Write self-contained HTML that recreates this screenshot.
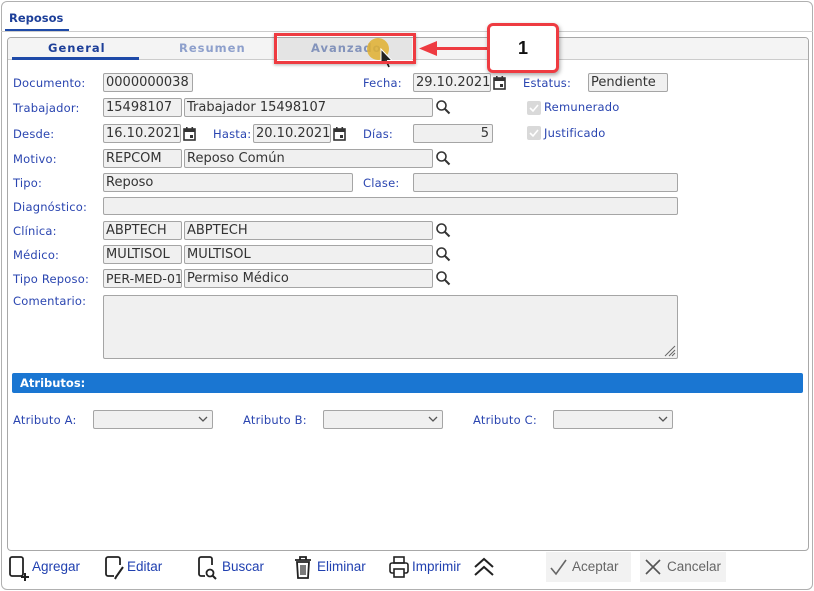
<!DOCTYPE html>
<html><head><meta charset="utf-8"><style>
*{box-sizing:border-box;margin:0;padding:0}
body{width:814px;height:591px;background:#fff;position:relative;overflow:hidden;font-family:"DejaVu Sans","Liberation Sans",sans-serif;}
.a{position:absolute}
.lbl{position:absolute;font-size:11.5px;color:#2a45b0;line-height:14px;letter-spacing:0.2px}
.f{position:absolute;height:19px;background:#f0f0f0;border:1px solid #a5a5a5;border-radius:2px;font-size:13px;color:#333;line-height:18px;padding-left:2px;white-space:nowrap;overflow:hidden;font-family:"DejaVu Sans",sans-serif}
.s{position:absolute;width:16px;height:16px}
.cb{position:absolute;width:14px;height:14px;background:#d9d9d9;border-radius:2px}
.tb{position:absolute;top:558px;font-size:13.5px;color:#2040b0;font-family:"Liberation Sans",sans-serif;line-height:18px}
</style></head><body>
<div class="a" style="left:1px;top:1px;width:812px;height:589px;border:1px solid #b0b0b0;border-radius:6px"></div>
<div class="a" style="left:9px;top:11px;font-size:11.5px;font-weight:bold;color:#1d3f99">Reposos</div>
<div class="a" style="left:5px;top:29px;width:64px;height:2px;background:#1e4aa8"></div>
<div class="a" style="left:1px;top:31px;width:812px;height:1px;background:#ccc"></div>
<div class="a" style="left:7px;top:37px;width:802px;height:514px;border:1px solid #a8a8a8;border-radius:4px"></div>
<div class="a" style="left:8px;top:38px;width:800px;height:22px;background:#f4f4f4;border-bottom:1px solid #ccc;border-radius:3px 3px 0 0"></div>
<div class="a" style="left:48px;top:41px;font-size:11.5px;font-weight:bold;color:#1d3f99;letter-spacing:1px">General</div>
<div class="a" style="left:12px;top:57px;width:127px;height:3px;background:#1e4aa8"></div>
<div class="a" style="left:179px;top:41px;font-size:11.5px;font-weight:bold;color:#8ea0cc;letter-spacing:1px">Resumen</div>
<div class="a" style="left:278px;top:38px;width:134px;height:22px;background:#e4e4e4"></div>
<div class="a" style="left:311px;top:41px;font-size:11.5px;font-weight:bold;color:#8393bb;letter-spacing:1px">Avanzado</div>
<div class="a" style="left:367px;top:38px;width:22px;height:22px;border-radius:50%;background:#e0b030;opacity:.85"></div>
<svg class="a" style="left:379px;top:48px" width="16" height="22"><path d="M2 1 L2 17 L6 13.5 L9 20 L11.5 19 L8.5 12.5 L13 12.5 Z" fill="#222" stroke="#fff" stroke-width="1"/></svg>
<div class="a" style="left:274px;top:33px;width:142px;height:31px;border:3px solid #ee3b41;box-shadow:0 1px 3px rgba(0,0,0,.3)"></div>
<svg class="a" style="left:415px;top:38px" width="75" height="22"><path d="M75 10.5 L20 10.5" stroke="#ee3b41" stroke-width="3"/><path d="M4 10.5 L22 3 L22 18 Z" fill="#ee3b41"/></svg>
<div class="a" style="left:487px;top:23px;width:72px;height:50px;border:3px solid #ee3b41;border-radius:6px;background:#fff;box-shadow:1px 2px 4px rgba(0,0,0,.35);text-align:center;font:bold 18px 'Liberation Sans',sans-serif;line-height:44px;color:#111">1</div>

<div class="lbl" style="left:13px;top:76px">Documento:</div>
<div class="f" style="left:103px;top:73px;width:90px">0000000038</div>
<div class="lbl" style="left:363px;top:76px">Fecha:</div>
<div class="f" style="left:413px;top:73px;width:78px">29.10.2021</div>
<svg class="s" style="left:492px;top:75px" viewBox="0 0 16 16"><rect x="2" y="3" width="11" height="11" fill="none" stroke="#333" stroke-width="1.6"/><rect x="2" y="3" width="11" height="3" fill="#333"/><rect x="4" y="1" width="1.6" height="3" fill="#333"/><rect x="9.5" y="1" width="1.6" height="3" fill="#333"/><rect x="8" y="9" width="3" height="3" fill="#333"/></svg>
<div class="lbl" style="left:523px;top:76px">Estatus:</div>
<div class="f" style="left:588px;top:73px;width:80px">Pendiente</div>

<div class="lbl" style="left:13px;top:101px">Trabajador:</div>
<div class="f" style="left:103px;top:98px;width:79px">15498107</div>
<div class="f" style="left:184px;top:98px;width:249px">Trabajador 15498107</div>
<svg class="s" style="left:435px;top:99px" viewBox="0 0 16 16"><circle cx="6.5" cy="6.5" r="4.5" fill="none" stroke="#333" stroke-width="1.6"/><path d="M10 10 L14.5 14.5" stroke="#333" stroke-width="2"/></svg>
<div class="cb" style="left:527px;top:101px"></div><svg class="a" style="left:527px;top:101px" width="14" height="14"><path d="M3 7 L6 10 L11 4" stroke="#fff" stroke-width="1.6" fill="none"/></svg>
<div class="lbl" style="left:544px;top:100px">Remunerado</div>

<div class="lbl" style="left:13px;top:127px">Desde:</div>
<div class="f" style="left:103px;top:124px;width:78px">16.10.2021</div>
<svg class="s" style="left:182px;top:126px" viewBox="0 0 16 16"><rect x="2" y="3" width="11" height="11" fill="none" stroke="#333" stroke-width="1.6"/><rect x="2" y="3" width="11" height="3" fill="#333"/><rect x="4" y="1" width="1.6" height="3" fill="#333"/><rect x="9.5" y="1" width="1.6" height="3" fill="#333"/><rect x="8" y="9" width="3" height="3" fill="#333"/></svg>
<div class="lbl" style="left:213px;top:127px">Hasta:</div>
<div class="f" style="left:253px;top:124px;width:78px">20.10.2021</div>
<svg class="s" style="left:332px;top:126px" viewBox="0 0 16 16"><rect x="2" y="3" width="11" height="11" fill="none" stroke="#333" stroke-width="1.6"/><rect x="2" y="3" width="11" height="3" fill="#333"/><rect x="4" y="1" width="1.6" height="3" fill="#333"/><rect x="9.5" y="1" width="1.6" height="3" fill="#333"/><rect x="8" y="9" width="3" height="3" fill="#333"/></svg>
<div class="lbl" style="left:363px;top:127px">Días:</div>
<div class="f" style="left:413px;top:124px;width:80px;text-align:right;padding-right:3px">5</div>
<div class="cb" style="left:527px;top:126px"></div><svg class="a" style="left:527px;top:126px" width="14" height="14"><path d="M3 7 L6 10 L11 4" stroke="#fff" stroke-width="1.6" fill="none"/></svg>
<div class="lbl" style="left:544px;top:126px">Justificado</div>

<div class="lbl" style="left:13px;top:152px">Motivo:</div>
<div class="f" style="left:103px;top:149px;width:79px">REPCOM</div>
<div class="f" style="left:184px;top:149px;width:249px">Reposo Común</div>
<svg class="s" style="left:435px;top:150px" viewBox="0 0 16 16"><circle cx="6.5" cy="6.5" r="4.5" fill="none" stroke="#333" stroke-width="1.6"/><path d="M10 10 L14.5 14.5" stroke="#333" stroke-width="2"/></svg>

<div class="lbl" style="left:13px;top:176px">Tipo:</div>
<div class="f" style="left:103px;top:173px;width:250px">Reposo</div>
<div class="lbl" style="left:363px;top:176px">Clase:</div>
<div class="f" style="left:413px;top:173px;width:265px"></div>

<div class="lbl" style="left:13px;top:200px">Diagnóstico:</div>
<div class="f" style="left:103px;top:197px;width:575px;height:18px"></div>

<div class="lbl" style="left:13px;top:224px">Clínica:</div>
<div class="f" style="left:103px;top:221px;width:79px">ABPTECH</div>
<div class="f" style="left:184px;top:221px;width:249px">ABPTECH</div>
<svg class="s" style="left:435px;top:222px" viewBox="0 0 16 16"><circle cx="6.5" cy="6.5" r="4.5" fill="none" stroke="#333" stroke-width="1.6"/><path d="M10 10 L14.5 14.5" stroke="#333" stroke-width="2"/></svg>

<div class="lbl" style="left:13px;top:248px">Médico:</div>
<div class="f" style="left:103px;top:245px;width:79px">MULTISOL</div>
<div class="f" style="left:184px;top:245px;width:249px">MULTISOL</div>
<svg class="s" style="left:435px;top:246px" viewBox="0 0 16 16"><circle cx="6.5" cy="6.5" r="4.5" fill="none" stroke="#333" stroke-width="1.6"/><path d="M10 10 L14.5 14.5" stroke="#333" stroke-width="2"/></svg>

<div class="lbl" style="left:13px;top:272px">Tipo Reposo:</div>
<div class="f" style="left:103px;top:269px;width:79px;font-size:12.5px">PER-MED-01</div>
<div class="f" style="left:184px;top:269px;width:249px">Permiso Médico</div>
<svg class="s" style="left:435px;top:270px" viewBox="0 0 16 16"><circle cx="6.5" cy="6.5" r="4.5" fill="none" stroke="#333" stroke-width="1.6"/><path d="M10 10 L14.5 14.5" stroke="#333" stroke-width="2"/></svg>

<div class="lbl" style="left:13px;top:294px">Comentario:</div>
<div class="f" style="left:103px;top:295px;width:575px;height:64px"></div>
<svg class="a" style="left:662px;top:343px" width="14" height="14"><path d="M13 3 L3 13 M13 7 L7 13 M13 10 L10 13" stroke="#666" stroke-width="1"/></svg>

<div class="a" style="left:12px;top:373px;width:791px;height:20px;background:#1a76d2;border-radius:2px"></div>
<div class="a" style="left:20px;top:376px;font-size:11.5px;font-weight:bold;color:#fff">Atributos:</div>

<div class="lbl" style="left:13px;top:413px">Atributo A:</div>
<div class="f" style="left:93px;top:410px;width:120px"></div>
<svg class="a" style="left:198px;top:415px" width="10" height="8"><path d="M1 2 L5 6 L9 2" stroke="#555" fill="none" stroke-width="1.3"/></svg>
<div class="lbl" style="left:243px;top:413px">Atributo B:</div>
<div class="f" style="left:323px;top:410px;width:120px"></div>
<svg class="a" style="left:428px;top:415px" width="10" height="8"><path d="M1 2 L5 6 L9 2" stroke="#555" fill="none" stroke-width="1.3"/></svg>
<div class="lbl" style="left:473px;top:413px">Atributo C:</div>
<div class="f" style="left:553px;top:410px;width:120px"></div>
<svg class="a" style="left:658px;top:415px" width="10" height="8"><path d="M1 2 L5 6 L9 2" stroke="#555" fill="none" stroke-width="1.3"/></svg>

<!-- toolbar -->
<svg class="a" style="left:8px;top:555px" width="22" height="26"><rect x="2" y="2" width="13" height="19" rx="2" fill="none" stroke="#222" stroke-width="1.8"/><path d="M17 18 V26 M13 22 H21" stroke="#222" stroke-width="2"/></svg>
<div class="tb" style="left:32px">Agregar</div>
<svg class="a" style="left:104px;top:555px" width="22" height="26"><path d="M10 21 H4 a2 2 0 0 1 -2 -2 V4 a2 2 0 0 1 2 -2 H14 a2 2 0 0 1 2 2 V10" fill="none" stroke="#222" stroke-width="1.8"/><path d="M19 12 L12 22 L11 24" stroke="#222" stroke-width="2"/></svg>
<div class="tb" style="left:127px">Editar</div>
<svg class="a" style="left:197px;top:555px" width="22" height="26"><path d="M8 21 H4 a2 2 0 0 1 -2 -2 V4 a2 2 0 0 1 2 -2 H13 a2 2 0 0 1 2 2 V10" fill="none" stroke="#222" stroke-width="1.8"/><circle cx="13" cy="18" r="3.5" fill="none" stroke="#222" stroke-width="1.8"/><path d="M15.5 20.5 L19 24" stroke="#222" stroke-width="2"/></svg>
<div class="tb" style="left:222px">Buscar</div>
<svg class="a" style="left:292px;top:555px" width="22" height="26"><path d="M3 5 H19 M8 5 V2 H14 V5" stroke="#222" stroke-width="1.8" fill="none"/><path d="M5 7 H17 L16 23 H6 Z" fill="none" stroke="#222" stroke-width="1.8"/><path d="M9 10 V20 M11 10 V20 M13 10 V20" stroke="#222" stroke-width="1.2"/></svg>
<div class="tb" style="left:317px">Eliminar</div>
<svg class="a" style="left:388px;top:555px" width="22" height="26"><rect x="6" y="2" width="10" height="6" fill="none" stroke="#222" stroke-width="1.6"/><rect x="2" y="8" width="18" height="10" rx="2" fill="none" stroke="#222" stroke-width="1.6"/><rect x="6" y="14" width="10" height="8" fill="#fff" stroke="#222" stroke-width="1.6"/></svg>
<div class="tb" style="left:412px">Imprimir</div>
<svg class="a" style="left:473px;top:556px" width="22" height="22"><path d="M2 11 L11 3 L20 11 M2 19 L11 11 L20 19" stroke="#222" stroke-width="2" fill="none"/></svg>
<div class="a" style="left:546px;top:552px;width:85px;height:30px;background:#f2f2f2"></div>
<svg class="a" style="left:549px;top:558px" width="20" height="20"><path d="M2 10 L7 16 L17 2" stroke="#666" stroke-width="1.6" fill="none"/></svg>
<div class="tb" style="left:572px;color:#666">Aceptar</div>
<div class="a" style="left:640px;top:552px;width:86px;height:30px;background:#f2f2f2"></div>
<svg class="a" style="left:644px;top:558px" width="18" height="18"><path d="M2 2 L16 16 M16 2 L2 16" stroke="#555" stroke-width="1.6"/></svg>
<div class="tb" style="left:667px;color:#666">Cancelar</div>
</body></html>
